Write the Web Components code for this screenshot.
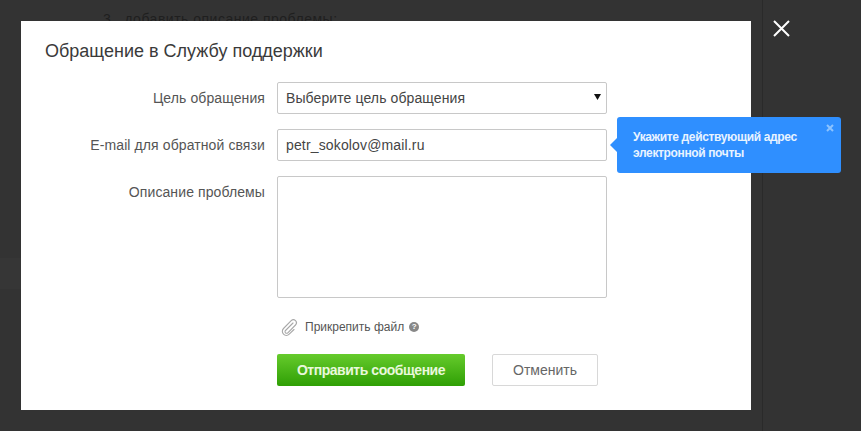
<!DOCTYPE html>
<html lang="ru">
<head>
<meta charset="utf-8">
<title>Обращение в Службу поддержки</title>
<style>
  html, body { margin: 0; height: 431px; overflow: hidden; background: #333; }
  body { font-family: "Liberation Sans", Arial, sans-serif; }
</style>
</head>
<body>
<support-page>
  <form-row label="Цель обращения"><fake-select>Выберите цель обращения</fake-select></form-row>
  <form-row label="E-mail для обратной связи">
    <fake-input>petr_sokolov@mail.ru</fake-input>
    <hint-bubble>Укажите действующий адрес<br>электронной почты</hint-bubble>
  </form-row>
  <form-row label="Описание проблемы"><fake-input multiline></fake-input></form-row>
  <attach-file>Прикрепить файл</attach-file>
  <form-actions></form-actions>
</support-page>

<script>
// Dimmed page with the dialog on top
class SupportPage extends HTMLElement {
  constructor() {
    super();
    this.attachShadow({ mode: 'open' });
    this.shadowRoot.innerHTML = `
      <style>
        :host {
          display: grid;
          width: 861px;
          height: 431px;
          overflow: hidden;
          background: #333;
          position: relative;
        }
        .behind, .layer { grid-area: 1 / 1; }
        .behind {
          box-sizing: border-box;
          width: 763px;
          border-right: 1px solid #2a2a2a;
          padding: 11px 0 0 103px;
          font-size: 14px;
          line-height: 16px;
          letter-spacing: 0.5px;
          color: #1f1f1f;
        }
        .band {
          width: 21px;
          height: 31px;
          margin: 231px 0 0 -103px;
          background: #363636;
        }
        .layer { padding: 21px; }
        .dialog {
          box-sizing: border-box;
          width: 730px;
          height: 389px;
          background: #fff;
          padding: 20px 24px 0;
        }
        h1 {
          margin: 0 0 20px;
          font-size: 18px;
          line-height: 21px;
          font-weight: normal;
          color: #3a3a3a;
        }
        .close {
          position: absolute;
          left: 773px;
          top: 20px;
          width: 17px;
          height: 17px;
        }
      </style>
      <div class="behind">3.&nbsp;&nbsp;добавить описание проблемы:<div class="band"></div></div>
      <div class="layer">
        <div class="dialog">
          <h1>Обращение в Службу поддержки</h1>
          <slot></slot>
        </div>
      </div>
      <svg class="close" viewBox="0 0 17 17"><path d="M1 1L16 16M16 1L1 16" stroke="#fff" stroke-width="2" fill="none"/></svg>
    `;
  }
}

// Label on the left, control on the right
class FormRow extends HTMLElement {
  constructor() {
    super();
    this.attachShadow({ mode: 'open' });
    this.shadowRoot.innerHTML = `
      <style>
        :host {
          display: grid;
          grid-template-columns: 220px 330px;
          column-gap: 12px;
          margin-bottom: 15px;
          position: relative;
        }
        label {
          text-align: right;
          font-size: 14px;
          line-height: 32px;
          letter-spacing: 0.1px;
          color: #555;
        }
      </style>
      <label></label>
      <div><slot></slot></div>
    `;
    this.shadowRoot.querySelector('label').textContent = this.getAttribute('label');
  }
}

class FakeInput extends HTMLElement {
  constructor() {
    super();
    this.attachShadow({ mode: 'open' });
    this.shadowRoot.innerHTML = `
      <style>
        :host {
          display: block;
          box-sizing: border-box;
          height: 32px;
          border: 1px solid #c8c8c8;
          border-radius: 2px;
          padding: 0 8px;
          font-size: 14px;
          line-height: 30px;
          letter-spacing: 0.15px;
          color: #444;
          background: #fff;
        }
        :host([multiline]) { height: 122px; }
      </style>
      <slot></slot>
    `;
  }
}

class FakeSelect extends HTMLElement {
  constructor() {
    super();
    this.attachShadow({ mode: 'open' });
    this.shadowRoot.innerHTML = `
      <style>
        :host {
          display: flex;
          justify-content: space-between;
          align-items: center;
          box-sizing: border-box;
          height: 32px;
          border: 1px solid #c8c8c8;
          border-radius: 2px;
          padding: 0 8px;
          font-size: 14px;
          letter-spacing: 0.1px;
          color: #444;
          background: #fff;
        }
        svg { width: 7px; height: 7px; margin-top: -3px; margin-right: -3px; }
      </style>
      <span><slot></slot></span>
      <svg viewBox="0 0 7 7"><path d="M0 1H7L3.5 7Z" fill="#111"/></svg>
    `;
  }
}

// Blue tooltip beside the e-mail field
class HintBubble extends HTMLElement {
  constructor() {
    super();
    this.attachShadow({ mode: 'open' });
    this.shadowRoot.innerHTML = `
      <style>
        :host {
          position: absolute;
          left: 572px;
          top: -12px;
          box-sizing: border-box;
          width: 224px;
          height: 56px;
          padding: 12px 16px;
          background: #2f8fff;
          border-radius: 3px;
          font-size: 12px;
          line-height: 16px;
          font-weight: bold;
          letter-spacing: -0.36px;
          color: #e8f3ff;
        }
        :host::before {
          content: "";
          position: absolute;
          left: -7px;
          top: 21px;
          border: 7px solid transparent;
          border-left: 0;
          border-right-color: #2f8fff;
        }
        svg { position: absolute; right: 7px; top: 7px; width: 8px; height: 8px; }
      </style>
      <slot></slot>
      <svg viewBox="0 0 8 8"><path d="M1 1L7 7M7 1L1 7" stroke="#8cc3ff" stroke-width="2" fill="none"/></svg>
    `;
  }
}

class AttachFile extends HTMLElement {
  constructor() {
    super();
    this.attachShadow({ mode: 'open' });
    this.shadowRoot.innerHTML = `
      <style>
        :host {
          display: flex;
          align-items: center;
          margin: 19px 0 0 235px;
          height: 20px;
          font-size: 12px;
          color: #555;
        }
        .clip { width: 19px; height: 17px; margin-right: 6px; }
        .help {
          width: 10px;
          height: 10px;
          margin-left: 5px;
          border-radius: 50%;
          background: #888;
          color: #fff;
          font-size: 8px;
          line-height: 10px;
          font-weight: bold;
          text-align: center;
        }
      </style>
      <svg class="clip" viewBox="0 0 19 17">
        <path d="M13 4L5.5 11.5a1.6 1.6 0 0 0 2.3 2.3L15.5 6a3 3 0 0 0 -4.3 -4.3L3.5 9.5a4 4 0 0 0 5.7 5.7L14 10.5" fill="none" stroke="#a8a8a8" stroke-width="1.1" stroke-linecap="round"/>
      </svg>
      <span><slot></slot></span>
      <span class="help">?</span>
    `;
  }
}

class FormActions extends HTMLElement {
  constructor() {
    super();
    this.attachShadow({ mode: 'open' });
    this.shadowRoot.innerHTML = `
      <style>
        :host {
          display: flex;
          gap: 27px;
          margin: 17px 0 0 232px;
        }
        button {
          box-sizing: border-box;
          height: 32px;
          padding: 0;
          border-radius: 2px;
          font-family: inherit;
          font-size: 14px;
        }
        .send {
          width: 188px;
          border: 0;
          background: linear-gradient(#66cb2c, #2f9f05);
          color: #e9f8dc;
          font-weight: bold;
          letter-spacing: -0.47px;
        }
        .cancel {
          width: 106px;
          border: 1px solid #d8d8d8;
          background: #fff;
          color: #666;
        }
      </style>
      <button class="send">Отправить сообщение</button>
      <button class="cancel">Отменить</button>
    `;
  }
}

customElements.define('support-page', SupportPage);
customElements.define('form-row', FormRow);
customElements.define('fake-input', FakeInput);
customElements.define('fake-select', FakeSelect);
customElements.define('hint-bubble', HintBubble);
customElements.define('attach-file', AttachFile);
customElements.define('form-actions', FormActions);
</script>
</body>
</html>
